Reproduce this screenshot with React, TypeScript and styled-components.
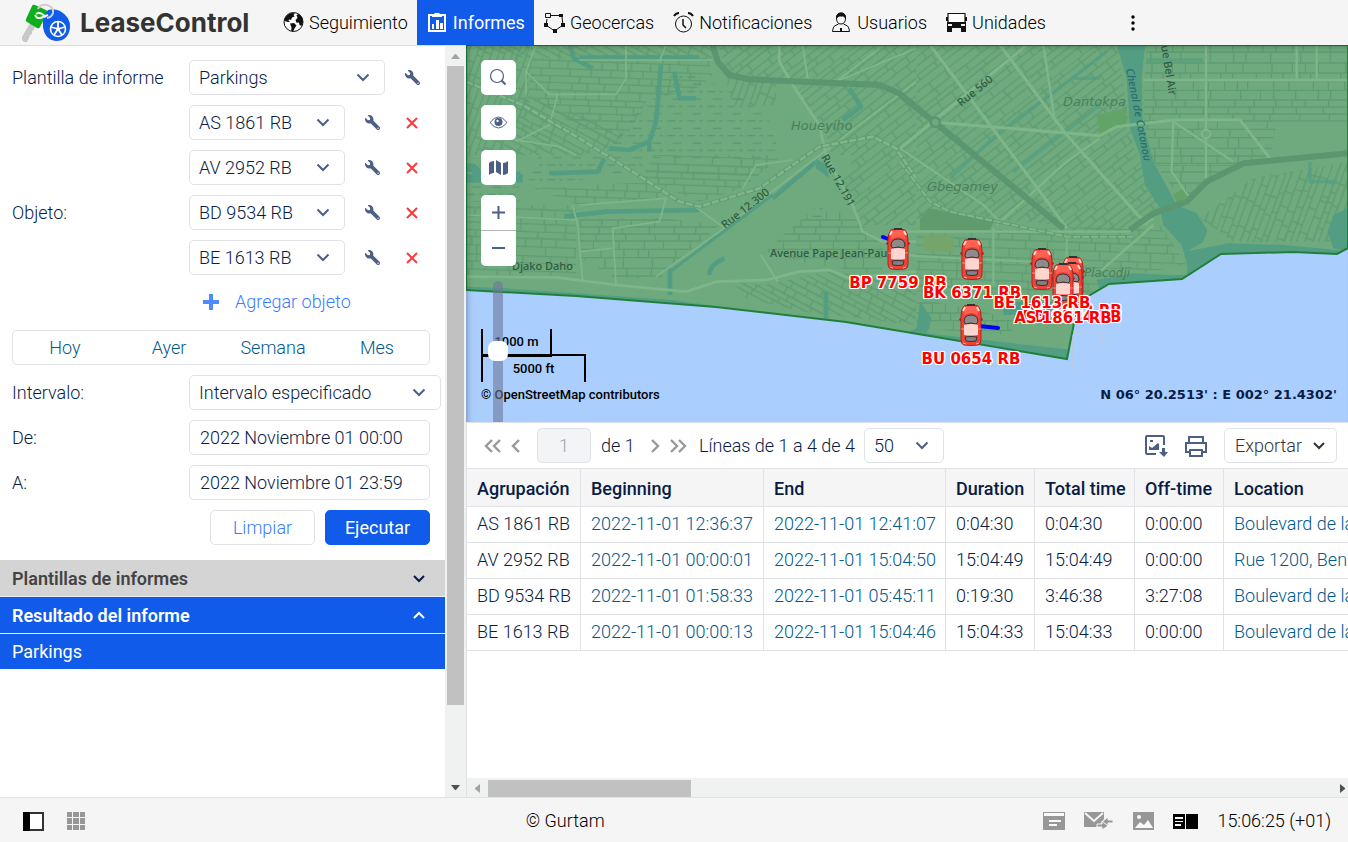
import React from "react";
import styled, { createGlobalStyle } from "styled-components";
import { FaWrench } from "react-icons/fa";

const font = `Roboto, "Liberation Sans", sans-serif`;
const mapFont = `"DejaVu Sans", Verdana, sans-serif`;
const roadFont = `"Noto Sans", sans-serif`;
const ink = "#081c46";
const steel = "#4c5f86";
const line = "#e1e1e8";
const blue = "#105bea";
const linkBlue = "#005a8c";

const GlobalStyle = createGlobalStyle`
  *, *::before, *::after { box-sizing: border-box; }
  body { margin: 0; font-family: ${font}; font-size: 18px; line-height: 22px; font-weight: 350; color: ${ink}; }
  button, input, select { font: inherit; color: inherit; margin: 0; }
  button { cursor: pointer; }
  a { color: inherit; text-decoration: none; }
  svg { display: block; flex: none; }
`;

const Page = styled.div`
  display: grid;
  grid-template-rows: 45px minmax(0, 1fr) 45px;
  height: 100vh;
  overflow: hidden;
`;

/* ---------- header ---------- */

const Header = styled.header`
  display: flex;
  align-items: center;
  background: #f5f5f5;
  color: #000;
`;

const Brand = styled.a`
  display: flex;
  align-items: center;
  gap: 9px;
  width: 273px;
  padding-left: 20px;
  font: 700 26px/32px Inter, sans-serif;
  color: #333;
`;

const Nav = styled.nav`
  display: flex;
  align-self: stretch;
`;

const NavItem = styled.a<{ $active?: boolean }>`
  display: flex;
  align-items: center;
  gap: 5px;
  padding: 0 9px 0 10px;
  white-space: nowrap;
  background: ${(p) => (p.$active ? blue : "transparent")};
  color: ${(p) => (p.$active ? "#fff" : "#000")};
  font-weight: ${(p) => (p.$active ? 400 : "inherit")};
`;

const MoreButton = styled.button`
  margin-left: auto;
  margin-right: 205px;
  padding: 0 8px;
  border: 0;
  background: none;
`;

/* ---------- left panel ---------- */

const Main = styled.main`
  display: flex;
  min-height: 0;
`;

const Sidebar = styled.aside`
  display: flex;
  flex: 0 0 466px;
  border-top: 1px solid #dcdcdc;
`;

const SidebarBody = styled.div`
  flex: 1;
  min-width: 0;
  background: #fff;
`;

const Form = styled.form`
  display: grid;
  grid-template-columns: 177px 1fr;
  row-gap: 10px;
  padding: 14px 0 15px 12px;
`;

const Caption = styled.label`
  align-self: center;
`;

const Line = styled.div`
  display: flex;
  align-items: center;
  height: 35px;
`;

const Stack = styled.div`
  display: flex;
  flex-direction: column;
  gap: 10px;
`;

const SelectBox = styled.span<{ $width: number }>`
  position: relative;
  display: flex;
  width: ${(p) => p.$width}px;
  height: 35px;

  svg {
    position: absolute;
    right: 15px;
    top: 13px;
    pointer-events: none;
  }
`;

const Select = styled.select`
  appearance: none;
  width: 100%;
  padding: 0 9px;
  border: 1px solid ${line};
  border-radius: 5px;
  background: #fff;
`;

const DateInput = styled.input`
  width: 241px;
  height: 35px;
  padding: 0 10px;
  border: 1px solid ${line};
  border-radius: 5px;
`;

const ToolButton = styled.button`
  display: flex;
  align-items: center;
  justify-content: center;
  width: 40px;
  height: 35px;
  padding: 0;
  border: 0;
  background: none;
  color: ${steel};
`;

const SettingsButton = styled(ToolButton)`
  margin-left: 7px;
  svg { transform: scaleX(-1); }
`;

const AddButton = styled.button`
  display: flex;
  align-items: center;
  gap: 15px;
  height: 35px;
  padding: 0 0 2px 13px;
  border: 0;
  background: none;
  color: #3a7bff;
`;

const Periods = styled.div`
  grid-column: 1 / -1;
  display: grid;
  grid-template-columns: repeat(4, 1fr);
  width: 418px;
  height: 35px;
  border: 1px solid ${line};
  border-radius: 5px;
`;

const PeriodButton = styled.button`
  padding: 0;
  border: 0;
  background: none;
  color: ${linkBlue};
`;

const Actions = styled.div`
  grid-column: 1 / -1;
  display: flex;
  justify-content: flex-end;
  gap: 10px;
  width: 418px;
`;

const ActionButton = styled.button<{ $primary?: boolean }>`
  width: 105px;
  height: 35px;
  padding: 0;
  border: 1px solid ${(p) => (p.$primary ? blue : line)};
  border-radius: 5px;
  background: ${(p) => (p.$primary ? blue : "#fff")};
  color: ${(p) => (p.$primary ? "#fff" : "#3a7bff")};
  font-weight: ${(p) => (p.$primary ? 400 : "inherit")};
`;

const SectionButton = styled.button<{ $open?: boolean }>`
  display: flex;
  align-items: center;
  justify-content: space-between;
  width: 100%;
  height: 37px;
  padding: 1px 19px 0 12px;
  border: 0;
  border-bottom: 1px solid #e8ecf6;
  background: ${(p) => (p.$open ? blue : "#d4d4d4")};
  color: ${(p) => (p.$open ? "#fff" : "#444")};
  font-weight: 600;

  svg { color: ${(p) => (p.$open ? "#fff" : ink)}; }
`;

const ResultLink = styled.a`
  display: flex;
  align-items: center;
  height: 35px;
  padding: 0 12px;
  background: ${blue};
  color: #fff;
  font-weight: 400;
`;

const VScroll = styled.div`
  display: flex;
  flex-direction: column;
  align-items: center;
  width: 21px;
  padding: 8px 0 7px;
  background: #f0f1f1;
`;

const VThumb = styled.div`
  flex: 0 1 639px;
  width: 17px;
  margin: 7px 0 auto;
  background: #c1c1c1;
`;

/* ---------- map ---------- */

const Right = styled.div`
  flex: 1;
  min-width: 0;
  display: grid;
  grid-template-rows: minmax(0, 1fr) 375px;
`;

const MapArea = styled.section`
  position: relative;
  overflow: hidden;
  background: #aacfff;

  &::after {
    content: "";
    position: absolute;
    inset: 0;
    pointer-events: none;
    box-shadow: inset 3px 3px 7px -3px rgba(0, 0, 0, 0.4);
  }
`;

const MapSvg = styled.svg`
  position: absolute;
  left: 0;
  top: 0;
  font-family: ${mapFont};
`;

const MapControls = styled.div`
  position: absolute;
  left: 15px;
  top: 15px;
  z-index: 4;
  display: flex;
  flex-direction: column;
  align-items: flex-start;
  gap: 10px;
`;

const MapButton = styled.button`
  display: flex;
  align-items: center;
  justify-content: center;
  width: 35px;
  height: 35px;
  padding: 0;
  border: 0;
  border-radius: 5px;
  background: #fff;
  color: ${steel};
`;

const ZoomGroup = styled.div`
  border-radius: 5px;
  background: #fff;
  overflow: hidden;

  button + button { border-top: 1px solid #b5b5b5; border-radius: 0; height: 36px; padding-bottom: 2px; }
`;

const ZoomSlider = styled.input`
  appearance: none;
  writing-mode: vertical-lr;
  width: 20px;
  height: 160px;
  margin: 5px 0 0 7px;
  background: none;

  &::-webkit-slider-runnable-track {
    width: 10px;
    height: 160px;
    margin: 0 auto;
    border-radius: 5px;
    background: rgba(110, 120, 155, 0.6);
  }

  &::-webkit-slider-thumb {
    appearance: none;
    width: 20px;
    height: 20px;
    margin-left: -5px;
    border-radius: 7px;
    background: #fff;
  }
`;

const MapFooter = styled.div`
  position: absolute;
  left: 15px;
  right: 11px;
  bottom: 19px;
  color: #000;
  font-size: 13px;
  line-height: 16px;
  font-weight: 500;
`;

const ScaleBar = styled.div<{ $width: number; $below?: boolean }>`
  width: ${(p) => p.$width}px;
  height: 28px;
  margin-top: ${(p) => (p.$below ? "-3px" : "0")};
  border: 2px solid #000;
  border-${(p) => (p.$below ? "bottom" : "top")}: 0;
  line-height: 26px;
  text-align: center;
`;

const MapNotes = styled.div`
  display: flex;
  justify-content: space-between;
  margin-top: 5px;
`;

const Coordinates = styled.span`
  font: 700 13px/16px ${mapFont};
  color: ${ink};
`;

const Pin = styled.div<{ $x: number; $y: number }>`
  position: absolute;
  left: ${(p) => p.$x}px;
  top: ${(p) => p.$y}px;

  svg { position: absolute; left: -12px; top: -21px; z-index: 1; }
`;

const PinLabel = styled.span`
  position: absolute;
  z-index: 2;
  top: 25px;
  transform: translateX(-50%);
  font: 700 15px/18px ${mapFont};
  color: #f00;
  white-space: nowrap;
  text-shadow: 1px 0 #fff, -1px 0 #fff, 0 1px #fff, 0 -1px #fff, 1px 1px #fff, -1px -1px #fff, 1px -1px #fff,
    -1px 1px #fff, 0 0 2px #fff;
`;

/* ---------- report ---------- */

const Report = styled.section`
  display: flex;
  flex-direction: column;
  min-width: 0;
  border-top: 1px solid ${line};
  border-left: 1px solid ${line};
  background: #fff;
  overflow: hidden;
`;

const ReportBar = styled.div`
  display: flex;
  align-items: center;
  height: 46px;
  padding: 0 11px 0 17px;
  white-space: nowrap;
  border-bottom: 1px solid ${line};
`;

const PagerButton = styled.button`
  display: flex;
  padding: 0;
  border: 0;
  background: none;
  color: #999;
  & + & { margin-left: 8px; }
`;

const PageInput = styled.input`
  width: 54px;
  height: 35px;
  margin: 0 10px 0 15px;
  padding: 0;
  border: 1px solid ${line};
  border-radius: 5px;
  background: #f3f4f6;
  color: #9da2ad;
  text-align: center;
`;

const PageCount = styled.span`
  width: 49px;
`;

const LineCount = styled.label`
  width: 155px;
  margin: 0 10px 0 12px;
`;

const BarTools = styled.div`
  display: flex;
  align-items: center;
  gap: 16px;
  margin-left: auto;
`;

const IconButton = styled.button`
  display: flex;
  padding: 0;
  border: 0;
  background: none;
  color: ${steel};
`;

const ExportButton = styled.button`
  display: flex;
  align-items: center;
  justify-content: space-between;
  width: 113px;
  height: 35px;
  padding: 0 10px;
  border: 1px solid ${line};
  border-radius: 5px;
  background: #fff;
  color: #333;
`;

const TableFrame = styled.div`
  flex: 1;
  min-height: 0;
  overflow: hidden;
`;

const Table = styled.table`
  table-layout: fixed;
  width: 3800px;
  border-collapse: separate;
  border-spacing: 0;
`;

const HeadCell = styled.th`
  height: 38px;
  padding: 2px 10px 0;
  border-right: 1px solid ${line};
  border-bottom: 1px solid ${line};
  background: #f5f5f5;
  font-weight: 500;
  text-align: left;
  white-space: nowrap;
`;

const Cell = styled.td`
  height: 36px;
  padding: 0 10px 2px;
  border-right: 1px solid ${line};
  border-bottom: 1px solid ${line};
  white-space: nowrap;
`;

const CellLink = styled.a`
  color: ${linkBlue};
`;

const HScroll = styled.div`
  display: flex;
  align-items: center;
  height: 19px;
  padding: 2px 3px 0 8px;
  background: #f0f1f1;
`;

const HThumb = styled.div`
  flex: 0 1 203px;
  height: 17px;
  margin: 0 auto 0 8px;
  background: #c1c1c1;
`;

/* ---------- footer ---------- */

const Footer = styled.footer`
  display: flex;
  align-items: center;
  padding: 2px 17px 0 23px;
  border-top: 1px solid ${line};
  background: #f5f5f5;
  color: #000;
`;

const FootGroup = styled.div<{ $gap: number }>`
  display: flex;
  align-items: center;
  gap: ${(p) => p.$gap}px;
`;

const Copyright = styled.span`
  flex: 1;
  text-align: center;
`;

const Clock = styled.time`
  white-space: nowrap;
`;

/* ---------- icons ---------- */

const Chevron = ({ up = false }: { up?: boolean }) => (
  <svg width="14" height="9" viewBox="0 0 14 9" fill="none" stroke="currentColor" strokeWidth="2">
    <path d={up ? "M2 7l5-5 5 5" : "M2 2l5 5 5-5"} />
  </svg>
);

const SelectChevron = () => (
  <svg width="14" height="9" viewBox="0 0 14 9" fill="none" stroke={steel} strokeWidth="2">
    <path d="M1.500 1.500l5.500 5.500 5.500-5.500" />
  </svg>
);

const Cross = () => (
  <svg width="12" height="12" viewBox="0 0 12 12" stroke="#fb3a3a" strokeWidth="2">
    <path d="M1 1l10 10M11 1L1 11" />
  </svg>
);

const LogoMark = () => (
  <svg width="51" height="42" viewBox="0 0 51 42">
    <path d="M10 21L2 35v3l2 2h3l2-4 1-3 2-1v-3l2-1v-2l3-3z" fill="#c8c8c8" />
    <path d="M12 4q1-2 3-1l11 5q2 1 1 3l-7 14q-1 2-3 1L7 20q-2-1-1-3z" fill="#10ae1c" />
    <path d="M24 14l4-6q6-2 12 1 11 6 10 17-2 13-14 13-11-1-13-14-1-6 1-11z" fill={blue} />
    <path d="M16 12q3-2 6 0l4 3M15 13q2 5 8 2l5-2" fill="none" stroke="#f5f5f5" strokeWidth="2" />
    <path d="M18 7q2-5 9-4 7 2 6 8-1 4-6 5" fill="none" stroke="#cfcfcf" strokeWidth="2" />
    <circle cx="38" cy="27" r="7.500" fill="none" stroke="#fff" strokeWidth="1.600" />
    <circle cx="38" cy="27" r="2" fill="#fff" />
    <path d="M38 27V20M38 27l7-2M38 27l4 6M38 27l-4 6M38 27l-7-2" stroke="#fff" strokeWidth="1.800" />
  </svg>
);

const GlobeIcon = () => (
  <svg width="21" height="21" viewBox="0 0 21 21">
    <circle cx="10.500" cy="10" r="9.500" fill="#fff" stroke="#111" />
    <path
      d="M2 6Q5 1 10 1l2 .6-1.500 1.400 1 1.500-2.500 1-1 2.500-2-.5-.6 1 1.600 1.500H5L1.500 9zM7 11.500l4-.5 2.500 2.500-2 3-1.500 3.500-1.800-1.500.3-3zM13.500 3l2.500-1.200 3.500 4.200.5 4-1.500 4-2-1-.5-2.500-2.500.2-1-2.700 2-2-.4-1.500z"
      fill="#111"
    />
  </svg>
);

const ReportIcon = () => (
  <svg width="21" height="21" viewBox="0 0 21 21" fill="none" stroke="#fff" strokeWidth="2">
    <path d="M2 3h16v16H2z" />
    <path d="M5 2h2l1-1h4l1 1h2v3H5z" fill="#fff" stroke="none" />
    <path d="M5 12h2v5H5zM9 8h3v9H9zM13 11h3v6h-3z" fill="#fff" stroke="none" />
  </svg>
);

const GeofenceIcon = () => (
  <svg width="21" height="21" viewBox="0 0 21 21" fill="none" stroke="#111">
    <path d="M7 3.500h8M18 5l1 8-8.500 6L2 13l1-6" />
    <path d="M1.500 1.500h5v4h-5z" />
    <path d="M15 2h4v3h-4zM0 11h4v4H0zM17 11h4v4h-4zM9 17h4v4H9z" fill="#111" stroke="none" />
  </svg>
);

const AlarmIcon = () => (
  <svg width="21" height="21" viewBox="0 0 21 21" fill="none" stroke="#111">
    <circle cx="10.500" cy="12" r="8" />
    <path d="M10 7v6l3 3" strokeWidth="1.500" />
    <path d="M1 4q2-3 5-3M20 4q-2-3-5-3" strokeWidth="2" />
  </svg>
);

const UserIcon = () => (
  <svg width="21" height="21" viewBox="0 0 21 21" fill="none" stroke="#111">
    <path d="M5.500 6q0-5 5-5 4 0 4 5 0 6-4.500 6t-4.500-6zM7.500 12l-4 2Q2 15 1.500 19.500h17Q18 15 16.500 14l-4-2" />
    <path d="M5.500 6q0-5 4.500-5t4.500 5l-2-2H8z" fill="#111" />
    <path d="M9 16h2v4H9z" fill="#111" stroke="none" />
  </svg>
);

const BusIcon = () => (
  <svg width="21" height="21" viewBox="0 0 21 21">
    <path d="M2 1.500h17V11H2z" fill="#fff" stroke="#111" strokeWidth="1.200" />
    <path d="M0 5h2v4H0zM19 5h2v4h-2zM1 10h19v8H1zM1 18h5v2H1zM15 18h5v2h-5z" fill="#111" />
    <path d="M2 12h4v2H2zM15 12h4v2h-4zM6 16h9v2H6z" fill="#f5f5f5" />
  </svg>
);

const CarIcon = () => (
  <svg width="24" height="42" viewBox="0 0 24 42">
    <path d="M0 15l3-2v4H1zM24 15l-3-2v4h2z" fill="#b9161a" />
    <path d="M5 2Q12-1 19 2q3 3 3 10v24q0 4-3 5-7 1-14 0-3-1-3-5V12Q2 5 5 2z" fill="#ee4438" stroke="#b5201c" />
    <path d="M6 3q6-2 12 0l1 8q-7-4-14 0z" fill="#ff6253" />
    <path d="M8 0h8v2H8z" fill="#333" />
    <path d="M4 7l2-4M20 7l-2-4" stroke="#ffd6d0" strokeWidth="2" />
    <path d="M5 18Q5 11 12 11t7 7l-2 2q-5-2-10 0z" fill="#8f8a8c" stroke="#333" />
    <path d="M5 21q7-2 14 0v10q-7 1-14 0z" fill="#ffd5d0" />
    <path d="M6 33q6-1 12 0l-1 4q-5 1-10 0z" fill="#858083" stroke="#333" />
    <path d="M2 25h3M19 25h3" stroke="#ff8a7d" />
    <path d="M4 39l3 1M20 39l-3 1" stroke="#ffb5ac" />
  </svg>
);

/* ---------- street map drawing ---------- */

/* City blocks: rows of streets joined by cross streets at uneven steps. */
const blocks = (seed: number, rowStep: number, crossStep: number) => {
  let s = seed;
  const rnd = () => {
    s = (s * 16807) % 2147483647;
    return s / 2147483647;
  };
  let d = "";
  for (let y = 0; y < 360; ) {
    const h = Math.round(rowStep * (0.8 + rnd() * 0.5));
    d += `M0 ${y}H360`;
    for (let x = Math.round(rnd() * crossStep); x < 360; x += Math.round(crossStep * (0.5 + rnd()))) {
      d += `M${x} ${y}v${h}`;
    }
    y += h;
  }
  return d;
};

const grids = [
  { id: "north", angle: -38, d: blocks(11, 20, 80) },
  { id: "flat", angle: 2, d: blocks(37, 22, 60) },
  { id: "steep", angle: -70, d: blocks(91, 20, 60) },
  { id: "slope", angle: 28, d: blocks(53, 18, 60) },
  { id: "wide", angle: 0, d: blocks(77, 26, 60) },
];

const Grids = ({ prefix }: { prefix: string }) => (
  <defs>
    {grids.map((g) => (
      <pattern key={g.id} id={prefix + g.id} width="360" height="360" patternUnits="userSpaceOnUse" patternTransform={`rotate(${g.angle})`}>
        <path d={g.d} fill="none" stroke="#5b996e" strokeWidth="4" />
      </pattern>
    ))}
    <pattern id={prefix + "marsh"} width="60" height="44" patternUnits="userSpaceOnUse">
      <path d="M4 8h24M40 8h10M20 30h26" stroke="#559470" strokeWidth="3" />
    </pattern>
  </defs>
);

const land =
  "M0 245L110 251 250 262 380 277 434 286 601 314 608 278 621 252 643 239 716 234 755 209 827 207 871 209 882 203V0H0z";

const StreetMap = () => (
  <MapSvg width="882" height="377" viewBox="0 0 882 377" role="img" aria-label="Cotonou">
    <defs>
      <clipPath id="land">
        <path d={land} />
      </clipPath>
    </defs>
    <path d={land} fill="#6eaa7d" />
    <g clipPath="url(#land)">
      <svg x="0" y="0" width="450" height="380" viewBox="0 0 1350 1140">
        <Grids prefix="w-" />
        <g opacity="0.8">
          <path d="M190 40H730L740 90 690 130 540 170 490 260 340 250 190 150z" fill="url(#w-flat)" />
          <path d="M0 0H740V40H180z" fill="url(#w-slope)" />
          <path d="M0 0H190V170L100 330H0z" fill="url(#w-steep)" />
          <path d="M190 150L480 270 430 310 350 330 100 330z" fill="url(#w-slope)" />
          <path d="M0 480H330V690H0zM200 430L560 410 600 460 340 480z" fill="url(#w-flat)" />
          <path d="M340 520H590L760 540 580 700H450L345 640z" fill="url(#w-wide)" />
          <path d="M560 330H950L830 430 700 470 530 400z" fill="url(#w-flat)" />
          <path d="M760 0H1350V540H1190L1120 400 1080 270 970 100 780 100z" fill="url(#w-north)" />
          <path d="M780 100H930V180H800z" fill="url(#w-steep)" />
          <path d="M960 500H1150L1250 600V690L1000 650 900 620z" fill="url(#w-wide)" />
          <path d="M800 710L900 720 1080 680 1350 700V840L1010 800 840 760z" fill="url(#w-slope)" />
        </g>
        <path d="M520 190L620 90H690L900 200 940 320 900 340H560L500 390 180 420 220 330 420 320z" fill="url(#w-marsh)" />
        <path d="M0 340H160V470H0zM920 470H1080V520H900z" fill="url(#w-marsh)" />
        <path d="M970 380L1040 330H1170L1110 440 960 560 880 640 730 700H590L610 670 780 560z" fill="#6eaa7d" />
        <g fill="none" stroke="#539e83" strokeWidth="14" strokeLinejoin="round">
          <path d="M585 60L570 230 550 290 490 315 430 310M550 290v30M415 340L395 380 250 385M625 80L640 160H690M310 0L325 40 380 70M340 38H700M1150 130L1185 185 1130 225" />
          <path d="M295 515L420 500 700 495M1050 350L920 460M1080 740V820M612 670V750M730 690Q730 660 775 640" />
          <path d="M0 370Q30 360 40 400H0M150 380v20h20" strokeWidth="26" />
          <path d="M920 450L612 680" strokeWidth="8" />
        </g>
        <path d="M1050 340l30 20 10 40-40-30z" fill="#539e83" />
        <path d="M0 725L120 730 620 765 930 810 620 785 0 745z" fill="#539e83" />
        <g fill="none" stroke="#7fb689" strokeWidth="8" strokeLinejoin="round">
          <path d="M940 0V50L980 120 1060 240 1080 330 1160 480 1190 560 1250 590H1350" />
          <path d="M0 695L270 697 450 720 660 740 750 710 900 705 1000 680 1090 675 1150 700 1350 680" />
          <path d="M340 45H740M210 0L180 80V150M480 0V100L450 148H250L180 80M600 0L580 50" strokeWidth="5" />
          <path d="M340 480L600 460 580 530 440 550 450 720M320 480L335 540 350 710M570 695L760 560 1350 110" strokeWidth="5" />
          <path d="M1350 10L1110 110 1240 10M830 430L870 360 980 345M680 480L770 545M340 620L440 610M0 510L330 525M120 280L280 305 330 330M150 290L250 240 275 150" strokeWidth="5" />
          <path d="M885 630L935 710M1010 0L1025 100" strokeWidth="6" />
        </g>
        <path d="M0 110L170 180 340 280 500 380 640 470 700 485 880 430 1060 305 1220 275 1290 310 1350 400" fill="none" stroke="#619b72" strokeWidth="12" />
        <path d="M0 110L170 180 340 280 500 380 640 470 700 485 880 430 1060 305 1220 275 1290 310 1350 400" fill="none" stroke="#7fb689" strokeWidth="8" strokeDasharray="22 5" />
        <path d="M740 0L755 50 790 90 850 103 1240 120 1300 145 1350 185" fill="none" stroke="#5a966f" strokeWidth="18" />
      </svg>
      <svg x="434" y="0" width="448" height="376" viewBox="0 0 1344 1128">
        <Grids prefix="e-" />
        <g opacity="0.8">
          <path d="M50 0H650L700 300 780 500 700 560H490L50 200z" fill="url(#e-north)" />
          <path d="M50 200L470 540 280 520 120 490 50 540z" fill="url(#e-north)" />
          <path d="M740 0H1344V230H1130L1110 340 1000 360 850 470 760 350 730 220z" fill="url(#e-wide)" />
          <path d="M900 520L1060 400 1344 350V480L1290 590H1000z" fill="url(#e-steep)" />
          <path d="M50 560L780 540 860 660 640 700 560 750 50 740z" fill="url(#e-flat)" />
          <path d="M50 760L340 820V870L50 850z" fill="url(#e-wide)" />
        </g>
        <path d="M60 520L90 490 280 530 270 555H60z" fill="#5f9b6d" />
        <path d="M590 210L680 190V235L600 268zM820 450L850 430 870 450 830 475z" fill="#62a467" />
        <path d="M70 570H160V620H70z" fill="#75a56b" />
        <path
          d="M650 0H735L725 100 728 230 760 350 830 480 890 505 922 555 910 590 865 618 985 595 1150 600 1310 615 1344 630V660H940L845 730 600 740 590 705 700 685 800 690 860 690 862 660 845 600 790 540 780 490 735 420 720 330 690 250 680 100z"
          fill="#539e83"
        />
        <path d="M60 770L95 820 80 865 340 895 520 915 500 960 0 870 50 850zM310 770H560L530 810H310z" fill="#539e83" />
        <path d="M1344 490L1300 510 1283 560 1300 610 1344 620z" fill="#539e83" />
        <g fill="none" stroke="#539e83" strokeWidth="10" opacity="0.7">
          <path d="M150 400L300 260 490 120 620 20M340 380L600 180M520 100L600 100M740 45H910M1230 350V410H1310" />
        </g>
        <g fill="none" stroke="#7fb689" strokeWidth="9" strokeLinejoin="round">
          <path d="M105 232L600 272 650 245 820 225H1020L1110 340M300 0L500 270 740 540M90 0L420 440 500 550M0 310L160 180 380 0" />
          <path d="M820 225L815 380 870 460M918 0V400M730 105H1344M1190 0V105M1250 0V105M430 0L465 230M290 540L500 350 600 280M0 560H690L760 520M600 680L760 540" strokeWidth="7" />
          <path d="M0 630L170 640 400 650M280 550V720M500 570V640M0 310L250 480 300 530M820 230L1000 350" strokeWidth="6" />
        </g>
        <path d="M0 350L90 470 150 500 340 540 500 575 700 575" fill="none" stroke="#5f9b70" strokeWidth="10" />
        <path d="M0 350L90 470 150 500 340 540 500 575 700 575" fill="none" stroke="#7fb689" strokeWidth="6" strokeDasharray="22 5" />
        <path d="M0 150L105 232 490 550M690 555L760 505 860 470 920 410 1030 355 1344 325" fill="none" stroke="#5a966f" strokeWidth="18" />
        <circle cx="106" cy="232" r="14" fill="#6eaa7d" stroke="#5a966f" strokeWidth="8" />
        <circle cx="918" cy="267" r="13" fill="#6eaa7d" stroke="#7fb689" strokeWidth="6" />
      </svg>
    </g>
    <path d={land} fill="none" stroke="#1f8139" strokeWidth="2" />
    <path d="M643 240l-6 18M608 288h28l1 8h11M607 290l-1 36" fill="none" stroke="#bfc9d8" />
    <g fill="#4b7f5c" fontStyle="italic" fontSize="13">
      <text x="325" y="85">Houeyiho</text>
      <text x="461" y="146">Gbegamey</text>
      <text x="597" y="61">Dantokpa</text>
      <text x="618" y="232" fontSize="12">Placodji</text>
    </g>
    <g fill="#2f5b42" fontSize="11" fontWeight="500" fontFamily={roadFont}>
      <text x="304" y="212">Avenue Pape Jean-Paul</text>
      <text x="46" y="225">Djako Daho</text>
      <text transform="translate(495 62) rotate(-39)">Rue 560</text>
      <text transform="translate(259 184) rotate(-38)">Rue 12.300</text>
      <text transform="translate(355 112) rotate(61)">Rue 12.191</text>
      <text transform="translate(694 -6) rotate(81)">Rue Bel Air</text>
      <text transform="translate(660 24) rotate(79)" fontStyle="italic" fill="#2f6d70">
        Chenal de Cotonou
      </text>
    </g>
    <path d="M417 192l8 3M513 281l19 2" stroke="#00f" strokeWidth="4" strokeLinecap="round" />
  </MapSvg>
);

/* ---------- data ---------- */

const nav = [
  { label: "Seguimiento", icon: <GlobeIcon /> },
  { label: "Informes", icon: <ReportIcon />, active: true },
  { label: "Geocercas", icon: <GeofenceIcon /> },
  { label: "Notificaciones", icon: <AlarmIcon /> },
  { label: "Usuarios", icon: <UserIcon /> },
  { label: "Unidades", icon: <BusIcon /> },
];

const units = ["AS 1861 RB", "AV 2952 RB", "BD 9534 RB", "BE 1613 RB"];

const pins = [
  { name: "AV 2952 RB", x: 607, y: 232 },
  { name: "BD 9534 RB", x: 606, y: 238 },
  { name: "AS 1861 RB", x: 597, y: 239 },
  { name: "BP 7759 RB", x: 432, y: 204 },
  { name: "BK 6371 RB", x: 506, y: 214 },
  { name: "BE 1613 RB", x: 576, y: 224 },
  { name: "BU 0654 RB", x: 505, y: 280 },
];

const columns = [
  { title: "Agrupación", width: 114 },
  { title: "Beginning", width: 183 },
  { title: "End", width: 182 },
  { title: "Duration", width: 89 },
  { title: "Total time", width: 100 },
  { title: "Off-time", width: 89 },
  { title: "Location", width: 3043 },
];

const rows = [
  ["AS 1861 RB", "2022-11-01 12:36:37", "2022-11-01 12:41:07", "0:04:30", "0:04:30", "0:00:00", "Boulevard de la Marina, Cotonou, Benin"],
  ["AV 2952 RB", "2022-11-01 00:00:01", "2022-11-01 15:04:50", "15:04:49", "15:04:49", "0:00:00", "Rue 1200, Benin"],
  ["BD 9534 RB", "2022-11-01 01:58:33", "2022-11-01 05:45:11", "0:19:30", "3:46:38", "3:27:08", "Boulevard de la Marina, Cotonou, Benin"],
  ["BE 1613 RB", "2022-11-01 00:00:13", "2022-11-01 15:04:46", "15:04:33", "15:04:33", "0:00:00", "Boulevard de la Marina, Cotonou, Benin"],
];

const linked = [1, 2, 6];

const Picker = ({ id, label, value, width }: { id: string; label?: string; value: string; width: number }) => (
  <SelectBox $width={width}>
    <Select id={id} aria-label={label} defaultValue={value}>
      <option>{value}</option>
    </Select>
    <SelectChevron />
  </SelectBox>
);

export default function App() {
  return (
    <>
      <GlobalStyle />
      <Page>
        <Header>
          <Brand href="#">
            <LogoMark />
            LeaseControl
          </Brand>
          <Nav>
            {nav.map((n) => (
              <NavItem key={n.label} href="#" $active={n.active}>
                {n.icon}
                {n.label}
              </NavItem>
            ))}
          </Nav>
          <MoreButton aria-label="Más">
            <svg width="4" height="16" viewBox="0 0 4 16" fill="#000">
              <circle cx="2" cy="2" r="1.700" />
              <circle cx="2" cy="8" r="1.700" />
              <circle cx="2" cy="14" r="1.700" />
            </svg>
          </MoreButton>
        </Header>

        <Main>
          <Sidebar>
            <SidebarBody>
              <Form onSubmit={(e) => e.preventDefault()}>
                <Caption htmlFor="template">Plantilla de informe</Caption>
                <Line>
                  <Picker id="template" value="Parkings" width={196} />
                  <SettingsButton type="button" aria-label="Propiedades">
                    <FaWrench size={15} />
                  </SettingsButton>
                </Line>

                <Caption htmlFor="unit0">Objeto:</Caption>
                <Stack>
                  {units.map((u, i) => (
                    <Line key={u}>
                      <Picker id={"unit" + i} label={i ? "Objeto" : undefined} value={u} width={156} />
                      <SettingsButton type="button" aria-label="Propiedades">
                        <FaWrench size={15} />
                      </SettingsButton>
                      <ToolButton type="button" aria-label="Quitar">
                        <Cross />
                      </ToolButton>
                    </Line>
                  ))}
                  <AddButton type="button">
                    <svg width="18" height="18" viewBox="0 0 18 18" stroke="#4f8bff" strokeWidth="4">
                      <path d="M9 1v16M1 9h16" />
                    </svg>
                    Agregar objeto
                  </AddButton>
                </Stack>

                <Periods>
                  {["Hoy", "Ayer", "Semana", "Mes"].map((p) => (
                    <PeriodButton key={p} type="button">
                      {p}
                    </PeriodButton>
                  ))}
                </Periods>

                <Caption htmlFor="interval">Intervalo:</Caption>
                <Picker id="interval" value="Intervalo especificado" width={252} />
                <Caption htmlFor="from">De:</Caption>
                <DateInput id="from" defaultValue="2022 Noviembre 01 00:00" />
                <Caption htmlFor="to">A:</Caption>
                <DateInput id="to" defaultValue="2022 Noviembre 01 23:59" />
                <Actions>
                  <ActionButton type="button">Limpiar</ActionButton>
                  <ActionButton $primary>Ejecutar</ActionButton>
                </Actions>
              </Form>
              <SectionButton>
                Plantillas de informes
                <Chevron />
              </SectionButton>
              <SectionButton $open>
                Resultado del informe
                <Chevron up />
              </SectionButton>
              <ResultLink href="#">Parkings</ResultLink>
            </SidebarBody>
            <VScroll>
              <svg width="9" height="5" viewBox="0 0 9 5" fill="#a3a3a3">
                <path d="M0 5l4-5h1l4 5z" />
              </svg>
              <VThumb />
              <svg width="9" height="5" viewBox="0 0 9 5" fill="#505050">
                <path d="M0 0h9L5 5H4z" />
              </svg>
            </VScroll>
          </Sidebar>

          <Right>
            <MapArea>
              <StreetMap />
              {pins.map((p) => (
                <Pin key={p.name} $x={p.x} $y={p.y}>
                  <CarIcon />
                  <PinLabel>{p.name}</PinLabel>
                </Pin>
              ))}
              <MapFooter>
                <ScaleBar $width={71}>1000 m</ScaleBar>
                <ScaleBar $width={105} $below>
                  5000 ft
                </ScaleBar>
                <MapNotes>
                  <span>© OpenStreetMap contributors</span>
                  <Coordinates>N 06° 20.2513' : E 002° 21.4302'</Coordinates>
                </MapNotes>
              </MapFooter>
              <MapControls>
                <MapButton aria-label="Buscar">
                  <svg width="19" height="19" viewBox="0 0 19 19" fill="none" stroke="currentColor">
                    <circle cx="8" cy="8" r="6.500" strokeWidth="1.200" />
                    <path d="M12.500 12.500l4 4" strokeWidth="2" />
                  </svg>
                </MapButton>
                <MapButton aria-label="Visibilidad">
                  <svg width="19" height="13" viewBox="0 0 19 13" fill="none" stroke="currentColor">
                    <path d="M1 6.500q8.500-11 17 0-8.500 11-17 0z" />
                    <circle cx="9.500" cy="6" r="4" fill="currentColor" stroke="none" />
                    <circle cx="8.500" cy="5" r="1.200" fill="#fff" stroke="none" />
                  </svg>
                </MapButton>
                <MapButton aria-label="Capas">
                  <svg width="19" height="15" viewBox="0 0 19 15" fill="currentColor">
                    <path d="M0 3q2-2 5-2v12q-3 0-5 2zM7 0l5 3v12l-5-3zM14 3q3 0 5-2v12q-2 2-5 2z" />
                  </svg>
                </MapButton>
                <ZoomGroup>
                  <MapButton aria-label="Acercar">
                    <svg width="13" height="13" viewBox="0 0 13 13" stroke="currentColor" strokeWidth="2">
                      <path d="M6.500 0v13M0 6.500h13" />
                    </svg>
                  </MapButton>
                  <MapButton aria-label="Alejar">
                    <svg width="13" height="2" viewBox="0 0 13 2" fill="currentColor">
                      <path d="M0 0h13v2H0z" />
                    </svg>
                  </MapButton>
                </ZoomGroup>
                <ZoomSlider type="range" aria-label="Zoom" min={0} max={100} defaultValue={43} />
              </MapControls>
            </MapArea>

            <Report>
              <ReportBar>
                <PagerButton aria-label="Primera">
                  <svg width="18" height="14" viewBox="0 0 18 14" fill="none" stroke="currentColor" strokeWidth="2.400">
                    <path d="M8 1L2 7l6 6M16 1l-6 6 6 6" />
                  </svg>
                </PagerButton>
                <PagerButton aria-label="Anterior">
                  <svg width="12" height="14" viewBox="0 0 12 14" fill="none" stroke="currentColor" strokeWidth="2.400">
                    <path d="M9 1L3 7l6 6" />
                  </svg>
                </PagerButton>
                <PageInput aria-label="Página" defaultValue="1" disabled />
                <PageCount>de 1</PageCount>
                <PagerButton aria-label="Siguiente">
                  <svg width="11" height="14" viewBox="0 0 11 14" fill="none" stroke="currentColor" strokeWidth="2.400">
                    <path d="M2 1l6 6-6 6" />
                  </svg>
                </PagerButton>
                <PagerButton aria-label="Última">
                  <svg width="18" height="14" viewBox="0 0 18 14" fill="none" stroke="currentColor" strokeWidth="2.400">
                    <path d="M2 1l6 6-6 6M10 1l6 6-6 6" />
                  </svg>
                </PagerButton>
                <LineCount htmlFor="perPage">Líneas de 1 a 4 de 4</LineCount>
                <Picker id="perPage" value="50" width={80} />
                <BarTools>
                  <IconButton aria-label="Guardar imagen">
                    <svg width="24" height="24" viewBox="0 0 24 24" fill="none" stroke="currentColor" strokeWidth="2">
                      <path d="M12 20H3q-1 0-1-2V3q0-1 1-1h16q1 0 1 1v8" />
                      <path d="M5 16v-4l3 2 6-5 1 1v6zM6 6h3v2H6zM18 14h3v4h3l-4 5-5-5h3z" fill="currentColor" stroke="none" />
                    </svg>
                  </IconButton>
                  <IconButton aria-label="Imprimir">
                    <svg width="24" height="24" viewBox="0 0 24 24" fill="none" stroke="currentColor" strokeWidth="2">
                      <path d="M5 9V3h14v6M5 18H2V9h20v9h-3M6 16h12v6H6z" />
                    </svg>
                  </IconButton>
                  <ExportButton>
                    Exportar
                    <Chevron />
                  </ExportButton>
                </BarTools>
              </ReportBar>
              <TableFrame>
                <Table>
                  <colgroup>
                    {columns.map((c) => (
                      <col key={c.title} width={c.width} />
                    ))}
                  </colgroup>
                  <thead>
                    <tr>
                      {columns.map((c) => (
                        <HeadCell key={c.title} scope="col">
                          {c.title}
                        </HeadCell>
                      ))}
                    </tr>
                  </thead>
                  <tbody>
                    {rows.map((r) => (
                      <tr key={r[0]}>
                        {r.map((v, i) => (
                          <Cell key={i}>{linked.includes(i) ? <CellLink href="#">{v}</CellLink> : v}</Cell>
                        ))}
                      </tr>
                    ))}
                  </tbody>
                </Table>
              </TableFrame>
              <HScroll>
                <svg width="5" height="9" viewBox="0 0 5 9" fill="#a3a3a3">
                  <path d="M5 0v9L0 5V4z" />
                </svg>
                <HThumb />
                <svg width="5" height="9" viewBox="0 0 5 9" fill="#505050">
                  <path d="M0 0v9l5-4V4z" />
                </svg>
              </HScroll>
            </Report>
          </Right>
        </Main>

        <Footer>
          <FootGroup $gap={23}>
            <IconButton aria-label="Panel">
              <svg width="21" height="19" viewBox="0 0 21 19">
                <path d="M1 1h19v17H1z" fill="#fff" stroke="#333" strokeWidth="2" />
                <path d="M0 0h7v19H0z" fill="#000" />
              </svg>
            </IconButton>
            <IconButton aria-label="Aplicaciones">
              <svg width="38" height="18" viewBox="0 0 38 18" fill="#979797">
                <path d="M0 0h5v5H0zM6 0h6v5H6zM13 0h5v5h-5zM0 6h5v6H0zM6 6h6v6H6zM13 6h5v6h-5zM0 13h5v5H0zM6 13h6v5H6zM13 13h5v5h-5z" />
              </svg>
            </IconButton>
          </FootGroup>
          <Copyright>© Gurtam</Copyright>
          <FootGroup $gap={19}>
            <IconButton aria-label="Registro">
              <svg width="40" height="18" viewBox="0 0 40 18">
                <path d="M18 0h22v18H18z" fill="#979797" />
                <path d="M19 1h20v3H19zM24 8h12v2H24zM24 12h8v2h-8z" fill="#fafafa" />
              </svg>
            </IconButton>
            <IconButton aria-label="Mensajes">
              <svg width="30" height="18" viewBox="0 0 30 18">
                <path d="M0 0h20v7l-6 8H0z" fill="#979797" />
                <path d="M1 1l9 8 9-8" fill="none" stroke="#f5f5f5" strokeWidth="2" />
                <path d="M29 8h-5V5l-6 5 6 4v-3h5z" fill="#979797" stroke="#f5f5f5" />
                <path d="M13 12h5V9l6 5-6 4v-3h-5z" fill="#979797" stroke="#f5f5f5" />
              </svg>
            </IconButton>
            <IconButton aria-label="Imágenes">
              <svg width="21" height="18" viewBox="0 0 21 18">
                <path d="M0 0h21v18H0z" fill="#979797" />
                <path d="M2 16l5-6 4 3 4-5 5 8z" fill="#fafafa" />
                <circle cx="6" cy="5" r="2" fill="#fafafa" />
              </svg>
            </IconButton>
            <IconButton aria-label="Vista">
              <svg width="25" height="15" viewBox="0 0 25 15">
                <path d="M0 0h12v15H0zM13 0h12v15H13z" fill="#000" />
                <path d="M2 3h8v2H2zM2 7h8v1H2zM2 10h6v2H2z" fill="#fff" />
              </svg>
            </IconButton>
            <Clock>15:06:25 (+01)</Clock>
          </FootGroup>
        </Footer>
      </Page>
    </>
  );
}
